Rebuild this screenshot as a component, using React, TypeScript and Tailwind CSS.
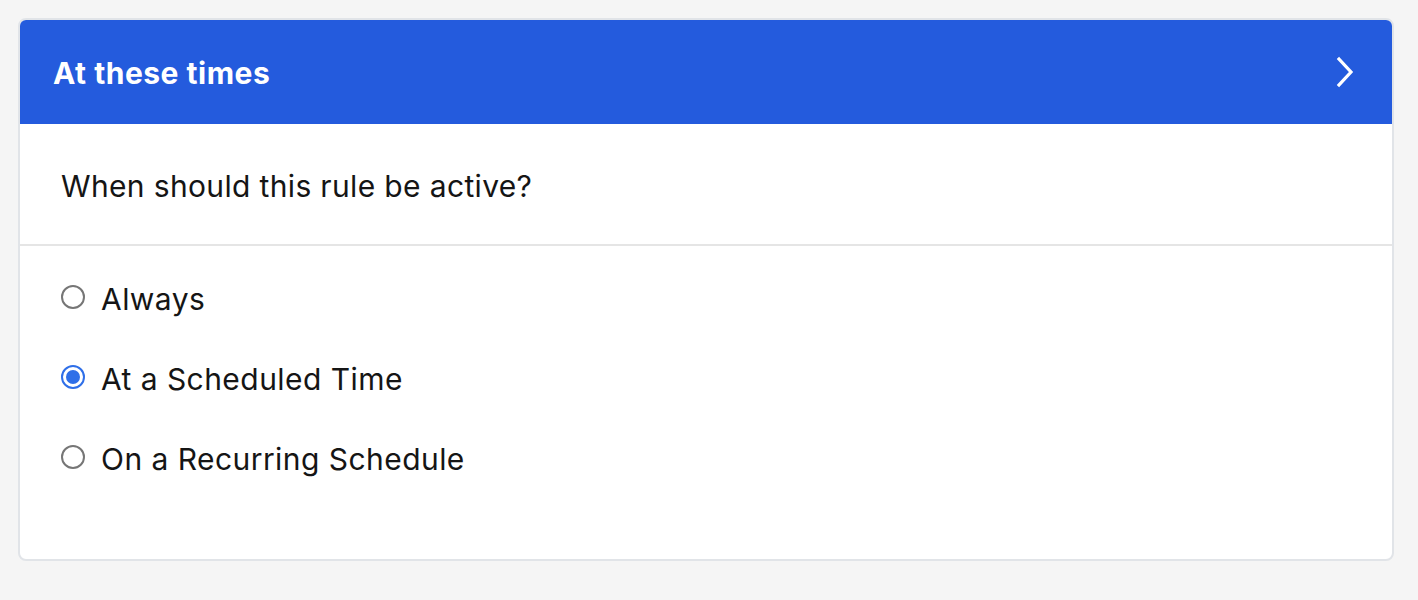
import React, { useState } from "react";

const options = ["Always", "At a Scheduled Time", "On a Recurring Schedule"];

const Radio = ({ checked }: { checked: boolean }) =>
  checked ? (
    <span className="w-6 h-6 rounded-full border-2 border-[#2f6fe8] flex items-center justify-center shrink-0">
      <span className="w-[14px] h-[14px] rounded-full bg-[#2f6fe8]" />
    </span>
  ) : (
    <span className="w-6 h-6 rounded-full border-2 border-[#767676] bg-white shrink-0" />
  );

const App = () => {
  const [selected, setSelected] = useState(1);
  return (
    <div
      className="min-h-[600px] bg-[#f5f5f5] pt-[18px] px-[18px] text-[#151515]"
      style={{ fontFamily: "Inter, 'Noto Sans', sans-serif" }}
    >
      <div className="w-[1376px] bg-white border-2 border-[#e1e4e8] rounded-[8px] overflow-hidden">
        {/* Header */}
        <div className="h-[104px] bg-[#245bdd] flex items-center justify-between pl-[33px] pr-[37px]">
          <h1 className="text-white text-[30px] font-bold tracking-[0.5px] pt-[2px]">At these times</h1>
          <svg width="20" height="32" viewBox="0 0 20 32" fill="none">
            <path d="M4 3 L16 16 L4 29" stroke="white" strokeWidth="3.2" strokeLinecap="square" strokeLinejoin="miter" />
          </svg>
        </div>
        {/* Question */}
        <div className="h-[122px] flex items-center pl-[41px] pt-[4px] border-b-2 border-[#e5e5e5]">
          <p className="text-[30px] tracking-[0.35px]">When should this rule be active?</p>
        </div>
        {/* Options */}
        <div className="pl-[41px] pt-[33px] pb-[84px] flex flex-col gap-[44px]">
          {options.map((label, i) => (
            <label
              key={label}
              className="flex items-center gap-4 h-9 cursor-pointer"
              onClick={() => setSelected(i)}
            >
              <Radio checked={selected === i} />
              <span className="text-[30px] tracking-[0.45px] pt-[5px]">{label}</span>
            </label>
          ))}
        </div>
      </div>
    </div>
  );
};

export default App;
